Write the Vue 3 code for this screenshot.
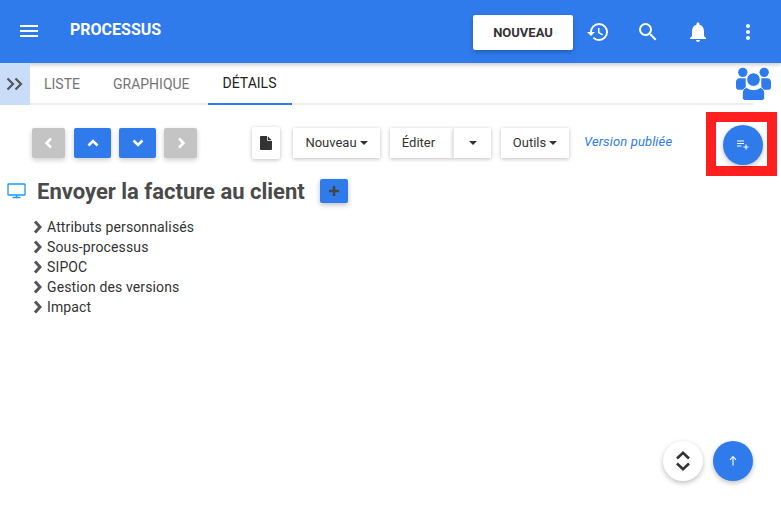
<script setup>
const tabs = [
  { label: 'LISTE', active: false },
  { label: 'GRAPHIQUE', active: false },
  { label: 'DÉTAILS', active: true }
]

const sections = ['Attributs personnalisés', 'Sous-processus', 'SIPOC', 'Gestion des versions', 'Impact']
</script>

<template>
  <div class="page">
    <header class="topbar">
      <svg class="menu-icon" viewBox="0 0 24 24" width="24" height="24"><path d="M3 18h18v-2H3v2zm0-5h18v-2H3v2zm0-7v2h18V6H3z" /></svg>
      <h1 class="app-title">PROCESSUS</h1>
      <button class="new-btn">NOUVEAU</button>
      <div class="top-icons">
        <svg viewBox="0 0 24 24" width="24" height="24"><path d="M13 3a9 9 0 0 0-9 9H1l3.89 3.89.07.14L9 12H6c0-3.87 3.13-7 7-7s7 3.13 7 7-3.13 7-7 7c-1.93 0-3.68-.79-4.94-2.06l-1.42 1.42A8.954 8.954 0 0 0 13 21a9 9 0 0 0 0-18zm-1 5v5l4.28 2.54.72-1.21-3.5-2.08V8H12z" /></svg>
        <svg viewBox="0 0 24 24" width="24" height="24"><path d="M15.5 14h-.79l-.28-.27A6.471 6.471 0 0 0 16 9.5 6.5 6.5 0 1 0 9.5 16c1.61 0 3.09-.59 4.23-1.57l.27.28v.79l5 4.99L20.49 19l-4.99-5zm-6 0C7.01 14 5 11.99 5 9.5S7.01 5 9.5 5 14 7.01 14 9.5 11.99 14 9.5 14z" /></svg>
        <svg viewBox="0 0 24 24" width="24" height="24"><path d="M12 22c1.1 0 2-.9 2-2h-4c0 1.1.9 2 2 2zm6-6v-5c0-3.07-1.63-5.64-4.5-6.32V4c0-.83-.67-1.5-1.5-1.5s-1.5.67-1.5 1.5v.68C7.64 5.36 6 7.92 6 11v5l-2 2v1h16v-1l-2-2z" /></svg>
        <svg viewBox="0 0 24 24" width="24" height="24"><path d="M12 8c1.1 0 2-.9 2-2s-.9-2-2-2-2 .9-2 2 .9 2 2 2zm0 2c-1.1 0-2 .9-2 2s.9 2 2 2 2-.9 2-2-.9-2-2-2zm0 6c-1.1 0-2 .9-2 2s.9 2 2 2 2-.9 2-2-.9-2-2-2z" /></svg>
      </div>
    </header>

    <nav class="tabbar">
      <div class="expand">
        <svg viewBox="0 0 18 14" width="18" height="14"><path d="M1.500 1.500 7 7l-5.500 5.500M9.500 1.500 15 7l-5.500 5.500" /></svg>
      </div>
      <div class="tabs">
        <a v-for="tab in tabs" :key="tab.label" class="tab" :class="{ active: tab.active }">{{ tab.label }}</a>
      </div>
      <svg class="team-icon" viewBox="0 0 36 34" width="35" height="34">
        <circle cx="7" cy="5" r="4.800" />
        <circle cx="29" cy="5" r="4.800" />
        <path d="M0 15c0-2.500 1.500-4 4-4h6v12H3c-1.800 0-3-1.200-3-3v-5zM36 15c0-2.500-1.500-4-4-4h-6v12h7c1.800 0 3-1.200 3-3v-5z" />
        <path class="ring" d="M11 20.500c1.800 1.500 4.300 2.300 7 2.300s5.200-.8 7-2.300c2.700.6 4.500 3 4.500 6V31c0 1.800-1.300 3-3 3h-17c-1.700 0-3-1.200-3-3v-4.500c0-3 1.800-5.400 4.500-6z" />
        <circle class="ring" cx="18" cy="12.500" r="7" />
      </svg>
    </nav>

    <section class="toolbar">
      <div class="nav-btns">
        <button class="nav-btn muted"><svg viewBox="0 0 12 12" width="12" height="12"><path d="M8 1.500 3.500 6 8 10.500" /></svg></button>
        <button class="nav-btn wide"><svg viewBox="0 0 12 12" width="12" height="12"><path d="M1.500 8.500 6 4l4.500 4.500" /></svg></button>
        <button class="nav-btn wide"><svg viewBox="0 0 12 12" width="12" height="12"><path d="M1.500 3.500 6 8l4.500-4.500" /></svg></button>
        <button class="nav-btn muted"><svg viewBox="0 0 12 12" width="12" height="12"><path d="M4 1.500 8.500 6 4 10.500" /></svg></button>
      </div>
      <button class="doc-btn">
        <svg viewBox="0 0 12 14" width="12" height="14">
          <path d="M0 1a1 1 0 0 1 1-1h6.500L12 4.500V13a1 1 0 0 1-1 1H1a1 1 0 0 1-1-1V1z" />
          <path class="fold" d="M7.500 0v4.500H12" />
        </svg>
      </button>
      <button class="tool-btn nouveau">Nouveau<i class="caret"></i></button>
      <div class="split">
        <button class="tool-btn editer">Éditer</button>
        <button class="tool-btn split-caret"><i class="caret"></i></button>
      </div>
      <button class="tool-btn outils">Outils<i class="caret"></i></button>
      <em class="version">Version publiée</em>
    </section>

    <section class="title-row">
      <svg class="monitor" viewBox="0 0 19 16" width="19" height="16"><path d="M1 1.500c0-.3.2-.5.5-.5h16c.3 0 .5.2.5.5v10c0 .3-.2.5-.5.5h-16c-.3 0-.5-.2-.5-.5zM9.500 12v2.500M5.500 14.500h8" /></svg>
      <h2>Envoyer la facture au client</h2>
      <button class="add-btn"><svg viewBox="0 0 12 12" width="12" height="12"><path d="M6 1v10M1 6h10" /></svg></button>
    </section>

    <ul class="sections">
      <li v-for="name in sections" :key="name">
        <svg viewBox="0 0 9 14" width="9" height="14"><path d="M2 1.500 7 7l-5 5.500" /></svg>
        {{ name }}
      </li>
    </ul>

    <div class="highlight">
      <button class="fab add-list">
        <svg viewBox="0 0 12 10" width="12" height="10"><path d="M0 1h7M0 3.500h7M0 6h4.500M9 4.500v5M6.500 7h5" /></svg>
      </button>
    </div>

    <div class="bottom-fabs">
      <button class="fab light">
        <svg viewBox="0 0 16 24" width="16" height="24"><path d="M2 9.500 8 3.800l6 5.700M2 14.500l6 5.700 6-5.700" /></svg>
      </button>
      <button class="fab">
        <svg viewBox="0 0 10 12" width="10" height="12"><path d="M5 10.500V2M2 4.800 5 1.500l3 3.300" /></svg>
      </button>
    </div>
  </div>
</template>

<style scoped>
.page {
  position: relative;
  width: 781px;
  height: 509px;
  overflow: hidden;
  background: #fff;
  font-family: Roboto, "Liberation Sans", sans-serif;
  color: #333;
}

button {
  font-family: inherit;
  border: none;
  padding: 0;
  cursor: pointer;
}

.topbar {
  display: flex;
  align-items: center;
  height: 63px;
  padding: 0 21px 0 17px;
  box-sizing: border-box;
  background: #2f7bec;
  box-shadow: 0 2px 4px rgba(0, 0, 0, 0.2);
  position: relative;
}

.menu-icon {
  fill: #fff;
  margin-bottom: 2px;
}

.app-title {
  margin: 0 0 5px 29px;
  font-size: 16px;
  font-weight: 700;
  color: #fff;
}

.new-btn {
  width: 100px;
  height: 35px;
  margin-left: auto;
  margin-top: 2px;
  background: #fff;
  border-radius: 2px;
  font-size: 13px;
  font-weight: 700;
  color: #333;
  box-shadow: 0 2px 5px rgba(0, 0, 0, 0.25);
  transform: translateX(1px);
}

.top-icons {
  display: flex;
  gap: 26px;
  margin-left: 14px;
  margin-top: 1px;
}

.top-icons svg {
  fill: #fff;
}

.tabbar {
  display: flex;
  height: 42px;
  position: relative;
}

.expand {
  display: flex;
  align-items: center;
  justify-content: center;
  width: 30px;
  background: #c9dcf8;
}

.expand svg path {
  fill: none;
  stroke: #555;
  stroke-width: 2.200;
}

.tabs {
  display: flex;
  width: 723px;
  border-bottom: 2px solid #eee;
  box-sizing: border-box;
}

.tab {
  display: flex;
  align-items: center;
  justify-content: center;
  height: 42px;
  padding: 0 15px;
  box-sizing: border-box;
  font-size: 14px;
  color: #757575;
}

.tab:first-child {
  padding-left: 14px;
}

.tab:nth-child(2) {
  padding: 0 18px;
}

.tab.active {
  padding-right: 16px;
  color: #222;
  border-bottom: 2px solid #2f7bec;
}

.team-icon {
  fill: #2f7bec;
  margin: 4px 0 0 -17px;
}

.team-icon .ring {
  stroke: #fff;
  stroke-width: 1;
}

.toolbar {
  display: flex;
  align-items: center;
  height: 32px;
  margin-top: 22px;
  padding-left: 32px;
}

.nav-btns {
  display: flex;
  gap: 8px;
  width: 220px;
}

.nav-btn {
  display: flex;
  align-items: center;
  justify-content: center;
  width: 37px;
  height: 30px;
  border-radius: 2px;
  background: #2f7bec;
  box-shadow: 0 2px 5px rgba(0, 0, 0, 0.2);
}

.nav-btn.muted {
  width: 33px;
  background: #c4c4c4;
}

.nav-btn:first-child {
  margin-right: 1px;
}

.nav-btn svg path {
  fill: none;
  stroke: #fff;
  stroke-width: 2.500;
}

.doc-btn {
  display: flex;
  align-items: center;
  justify-content: center;
  width: 28px;
  height: 32px;
  background: #fff;
  box-shadow: 0 1px 4px rgba(0, 0, 0, 0.25);
  border-radius: 2px;
}

.doc-btn svg {
  fill: #333;
}

.doc-btn .fold {
  fill: none;
  stroke: #fff;
  stroke-width: 0.800;
}

.tool-btn {
  height: 30px;
  padding-bottom: 2px;
  background: #fff;
  font-size: 13px;
  color: #333;
  box-shadow: 0 1px 4px rgba(0, 0, 0, 0.25);
}

.caret {
  display: inline-block;
  margin-left: 3px;
  vertical-align: 2px;
  border-top: 4px solid #333;
  border-left: 4.500px solid transparent;
  border-right: 4.500px solid transparent;
}

.nouveau {
  width: 87px;
  margin-left: 13px;
}

.split {
  display: flex;
  margin-left: 10px;
}

.editer {
  width: 63px;
  padding-right: 6px;
}

.split-caret {
  width: 38px;
  border-left: 1px solid #e8e8e8;
}

.split-caret .caret {
  margin-left: 0;
}

.outils {
  width: 68px;
  margin-left: 10px;
}

.version {
  margin-left: 15px;
  margin-top: -3px;
  font-size: 13px;
  letter-spacing: 0.13px;
  color: #2f7bec;
}

.title-row {
  display: flex;
  align-items: center;
  height: 24px;
  margin-top: 20px;
  padding-left: 7px;
}

.monitor path {
  fill: none;
  stroke: #2196f3;
  stroke-width: 1.300;
}

.title-row h2 {
  margin: 0 0 0 11px;
  font-size: 22px;
  font-weight: 700;
  color: #4a4a4a;
  white-space: nowrap;
}

.add-btn {
  display: flex;
  align-items: center;
  justify-content: center;
  width: 28px;
  height: 24px;
  margin-left: 15px;
  background: #2f7bec;
  border-radius: 2px;
  box-shadow: 0 2px 5px rgba(0, 0, 0, 0.25);
}

.add-btn svg path {
  fill: none;
  stroke: #444;
  stroke-width: 2.500;
}

.sections {
  margin: 14px 0 0;
  padding: 0 0 0 33px;
  list-style: none;
  font-size: 14px;
  letter-spacing: 0.13px;
  color: #333;
}

.sections li {
  display: flex;
  align-items: center;
  gap: 5px;
  height: 20px;
}

.sections svg path {
  fill: none;
  stroke: #555;
  stroke-width: 3;
}

.highlight {
  position: absolute;
  left: 706px;
  top: 112px;
  width: 51px;
  height: 44px;
  border: 10px solid #ff1f1f;
  background: #fff;
}

.fab {
  display: flex;
  align-items: center;
  justify-content: center;
  width: 40px;
  height: 40px;
  border-radius: 50%;
  background: #2f7bec;
  box-shadow: 0 2px 5px rgba(0, 0, 0, 0.25);
}

.fab svg path {
  fill: none;
  stroke: #fff;
  stroke-width: 1.100;
}

.add-list {
  position: absolute;
  left: 7px;
  top: 3px;
}

.bottom-fabs {
  position: absolute;
  left: 663px;
  top: 441px;
  display: flex;
  gap: 10px;
}

.fab.light {
  background: #fff;
}

.fab.light svg path {
  stroke: #333;
  stroke-width: 2.600;
}
</style>
